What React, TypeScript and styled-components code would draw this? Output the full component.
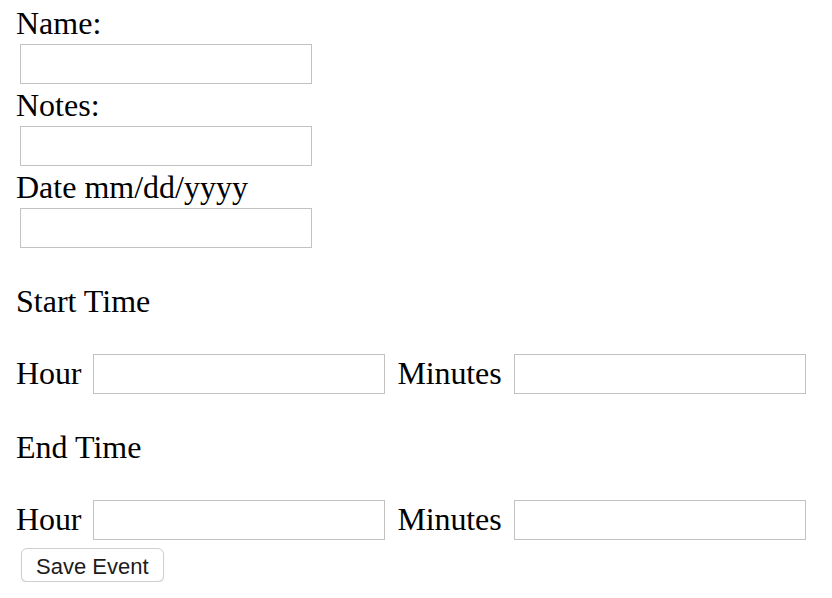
import React from "react";
import styled, { createGlobalStyle } from "styled-components";

const GlobalStyle = createGlobalStyle`
  html, body {
    margin: 0;
    padding: 0;
    background: #ffffff;
  }
  body {
    font-family: "Liberation Serif", "Times New Roman", serif;
    font-size: 32px;
    color: #000000;
  }
`;

const Form = styled.form`
  display: flex;
  flex-direction: column;
  align-items: flex-start;
  padding: 6px 0 0 16px;
`;

const FieldLabel = styled.label`
  display: block;
  font-size: 32px;
  line-height: 34px;
  height: 34px;
`;

const TextInput = styled.input`
  box-sizing: border-box;
  width: 292px;
  height: 40px;
  margin: 4px;
  padding: 0 6px;
  border: 1px solid #c2c2c2;
  border-radius: 0;
  background: #ffffff;
  font-family: "Liberation Sans", Arial, sans-serif;
  font-size: 22px;
  outline: none;
`;

const SectionTitle = styled.p`
  margin: 32px 0;
  font-size: 32px;
  line-height: 34px;
`;

const TimeRow = styled.div`
  display: flex;
  align-items: center;
  gap: 8px;
`;

const RowLabel = styled.label`
  font-size: 32px;
  line-height: 34px;
  padding-bottom: 3px;
  letter-spacing: -0.1px;
`;

const SaveButton = styled.button`
  box-sizing: border-box;
  margin: 4px 0 0 5px;
  height: 34px;
  padding: 3px 14px 0 14px;
  background: #ffffff;
  border: 1px solid #cfcfcf;
  border-radius: 6px;
  box-shadow: 0 1px 1px rgba(0, 0, 0, 0.12);
  font-family: "Liberation Sans", Arial, sans-serif;
  font-size: 22px;
  line-height: 26px;
  color: #1c1c1c;
  cursor: pointer;
`;

const TimeFields: React.FC<{ prefix: string }> = ({ prefix }) => (
  <TimeRow>
    <RowLabel htmlFor={`${prefix}-hour`}>Hour</RowLabel>
    <TextInput id={`${prefix}-hour`} type="text" />
    <RowLabel htmlFor={`${prefix}-min`}>Minutes</RowLabel>
    <TextInput id={`${prefix}-min`} type="text" />
  </TimeRow>
);

export default function App() {
  return (
    <>
      <GlobalStyle />
      <Form onSubmit={(e) => e.preventDefault()}>
        <FieldLabel htmlFor="name">Name:</FieldLabel>
        <TextInput id="name" type="text" />
        <FieldLabel htmlFor="notes">Notes:</FieldLabel>
        <TextInput id="notes" type="text" />
        <FieldLabel htmlFor="date">Date mm/dd/yyyy</FieldLabel>
        <TextInput id="date" type="text" />
        <SectionTitle>Start Time</SectionTitle>
        <TimeFields prefix="start" />
        <SectionTitle>End Time</SectionTitle>
        <TimeFields prefix="end" />
        <SaveButton type="submit">Save Event</SaveButton>
      </Form>
    </>
  );
}
